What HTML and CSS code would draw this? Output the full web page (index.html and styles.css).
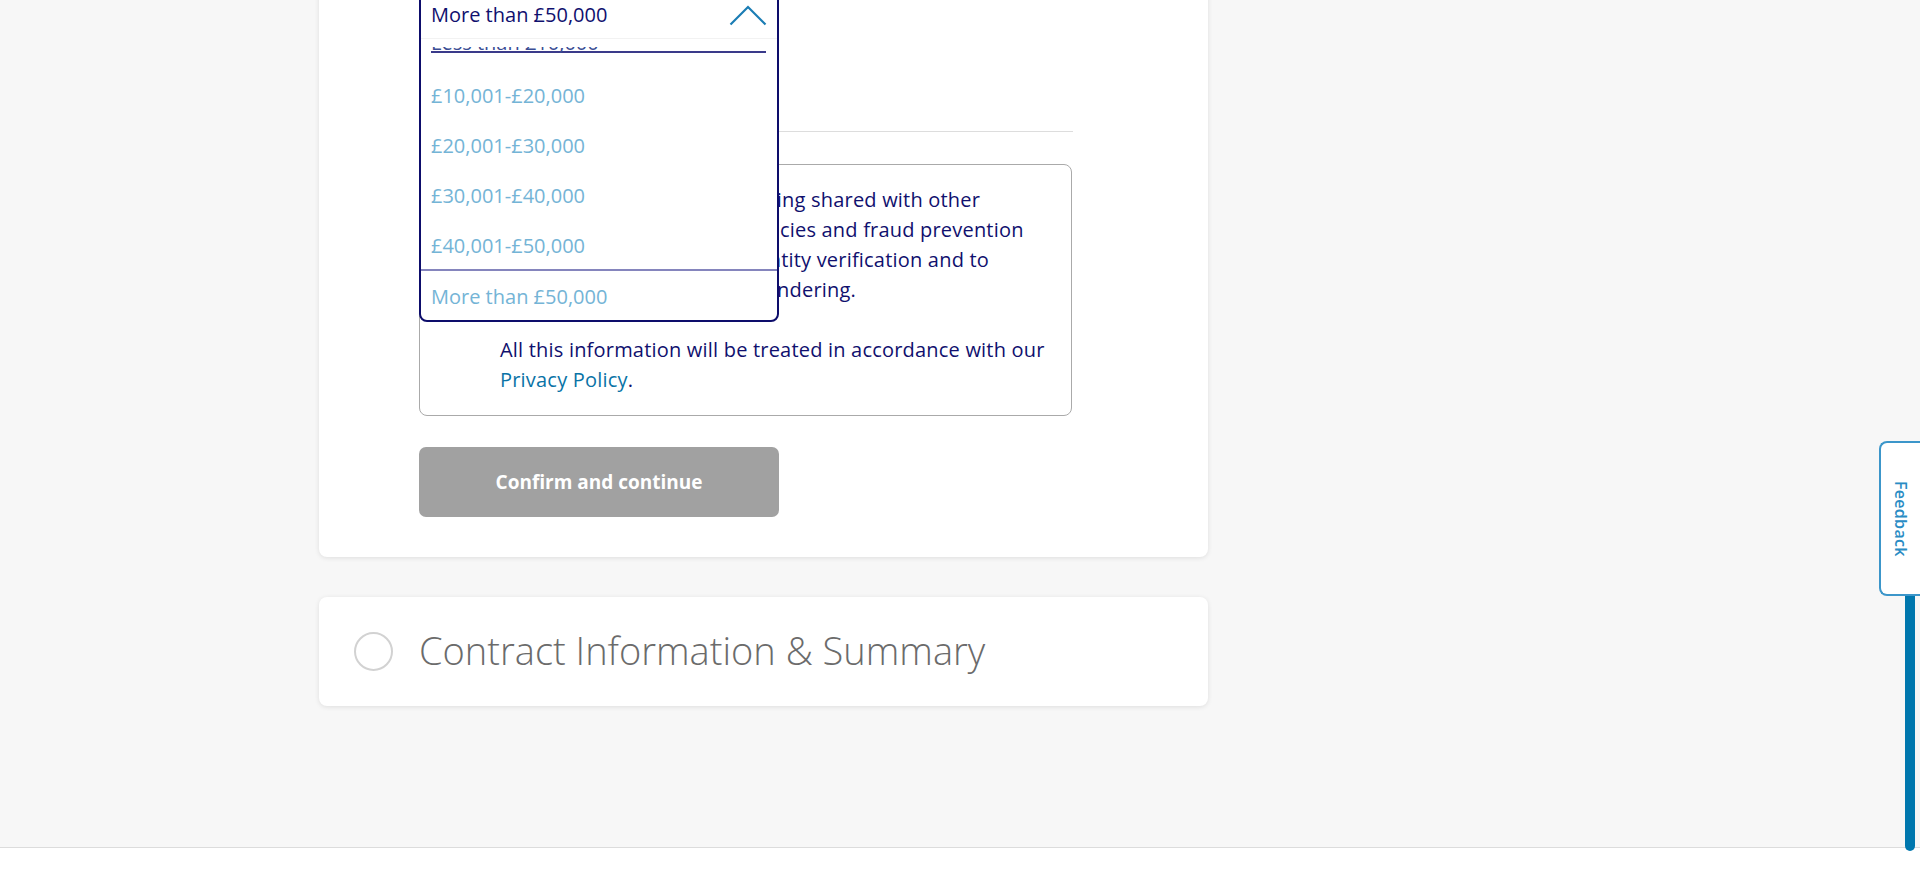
FILE: index.html
```html
<!DOCTYPE html>
<html lang="en">
<head>
<meta charset="utf-8">
<title>Application</title>
<link rel="stylesheet" href="styles.css">
</head>
<body>
<main class="main">
  <section class="card card-form">
    <div class="field">
      <div class="select-closed">More than £50,000</div>
      <div class="dropdown">
        <div class="dd-head">
          <span class="dd-value">More than £50,000</span>
          <svg class="chev" width="38" height="22" viewBox="0 0 38 22"><polyline points="1.5,20.5 19,3 36.5,20.5" fill="none" stroke="#1b7db4" stroke-width="2.2"/></svg>
        </div>
        <ul class="dd-list">
          <li class="opt opt-active"><span class="opt-line">Less than £10,000</span></li>
          <li class="opt">£10,001-£20,000</li>
          <li class="opt">£20,001-£30,000</li>
          <li class="opt">£30,001-£40,000</li>
          <li class="opt">£40,001-£50,000</li>
          <li class="opt opt-selected">More than £50,000</li>
        </ul>
      </div>
    </div>
    <hr class="divider">
    <div class="info">
      <p class="info-p info-lines">These include your details being shared with other<br>parties, credit reference agencies and fraud prevention<br>agencies for purposes of identity verification and to<br>prevent fraud and money laundering.</p>
      <p class="info-p">All this information will be treated in accordance with our <a class="link" href="#">Privacy Policy</a>.</p>
    </div>
    <button class="btn" type="button">Confirm and continue</button>
  </section>
  <section class="card card-step">
    <span class="step-circle"></span>
    <h2 class="step-title">Contract Information &amp; Summary</h2>
  </section>
</main>
<footer class="footer"></footer>
<div class="side-bar"></div>
<a class="feedback" href="#"><span class="feedback-text">Feedback</span></a>
</body>
</html>
```
FILE: styles.css
```css
* { box-sizing: border-box; }
html, body { margin: 0; padding: 0; }
body {
  height: 878px;
  overflow: hidden;
  background: #f7f7f7;
  font-family: "Open Sans", "Noto Sans", sans-serif;
  color: #10106e;
  display: flex;
  flex-direction: column;
}
.main {
  flex: 1;
  margin-top: -60px;
  padding-left: 319px;
  width: 1208px;
  min-height: 0;
}
.card {
  background: #fff;
  border-radius: 8px;
  box-shadow: 0 1px 5px rgba(0,0,0,0.10);
  width: 889px;
}
.card-form {
  padding: 49px 135px 40px 100px;
}
.field {
  position: relative;
  width: 360px;
  height: 50px;
}
.select-closed {
  height: 50px;
  border: 1px solid #999;
  border-radius: 8px;
  padding: 0 12px;
  line-height: 48px;
  font-size: 20px;
}
.dropdown {
  position: absolute;
  top: 0;
  left: 0;
  width: 360px;
  background: #fff;
  border: 2px solid #0d0d6b;
  border-radius: 8px;
  z-index: 5;
  overflow: hidden;
}
.dd-head {
  height: 48px;
  border-bottom: 1px solid #f2f2f2;
  display: flex;
  align-items: center;
  justify-content: space-between;
  padding: 0 10px 0 10px;
}
.dd-value {
  font-size: 20px;
  color: #10106e;
}
.chev { display: block; margin-top: 1px; }
.dd-list {
  list-style: none;
  margin: 8px 0 0 0;
  padding: 0;
  height: 273px;
  overflow: hidden;
}
.opt {
  height: 50px;
  line-height: 50px;
  padding-left: 10px;
  font-size: 20px;
  color: #74b4d6;
  white-space: nowrap;
}
.opt-active {
  margin-top: -26px;
  padding: 0 11px 0 10px;
  color: #3a4d94;
}
.opt-line {
  display: block;
  height: 32px;
  line-height: 44px;
  border-bottom: 2px solid #3a3a8a;
  overflow: visible;
}
.opt-selected {
  margin-top: -2px;
  border-top: 2px solid #8585bd;
  height: 53px;
  line-height: 51px;
}
.divider {
  border: 0;
  border-top: 1px solid #ddd;
  margin: 92px 0 0 0;
  width: 654px;
}
.info {
  margin-top: 32px;
  width: 653px;
  border: 1px solid #aaa;
  border-radius: 8px;
  padding: 20px 14px 20px 80px;
}
.info-p {
  margin: 0;
  font-size: 20px;
  line-height: 30px;
  letter-spacing: 0.2px;
  color: #10106e;
}
.info-lines { white-space: nowrap; }
.info-p + .info-p { margin-top: 30px; }
.link { color: #0a73a6; text-decoration: none; }
.btn {
  display: block;
  margin-top: 31px;
  width: 360px;
  height: 70px;
  border: 0;
  border-radius: 7px;
  background: #a1a1a1;
  color: #fff;
  font-family: "Open Sans", "Noto Sans", sans-serif;
  font-weight: 700;
  font-size: 19px;
}
.card-step {
  margin-top: 40px;
  height: 109px;
  display: flex;
  align-items: center;
  padding-left: 35px;
}
.step-circle {
  width: 39px;
  height: 39px;
  border: 2px solid #d2d2d2;
  border-radius: 50%;
  margin-right: 26px;
  flex: none;
}
.step-title {
  margin: 0 0 4px 0;
  font-size: 38px;
  font-weight: 300;
  color: #6b6b6b;
}
.footer {
  height: 31px;
  flex: none;
  background: #fff;
  border-top: 1px solid #dcdcdc;
}
.side-bar {
  position: fixed;
  left: 1905px;
  top: 590px;
  width: 10px;
  height: 261px;
  background: #0077ae;
  border-radius: 0 0 5px 5px;
}
.feedback {
  position: fixed;
  left: 1879px;
  top: 441px;
  width: 45px;
  height: 155px;
  background: #fff;
  border: 2px solid #3c96ca;
  border-right: 0;
  border-radius: 8px 0 0 8px;
  display: flex;
  align-items: center;
  justify-content: center;
  text-decoration: none;
  padding-right: 4px;
}
.feedback-text {
  writing-mode: vertical-rl;
  font-size: 16px;
  font-weight: 600;
  color: #2a8cc4;
  letter-spacing: 0.3px;
}
```
